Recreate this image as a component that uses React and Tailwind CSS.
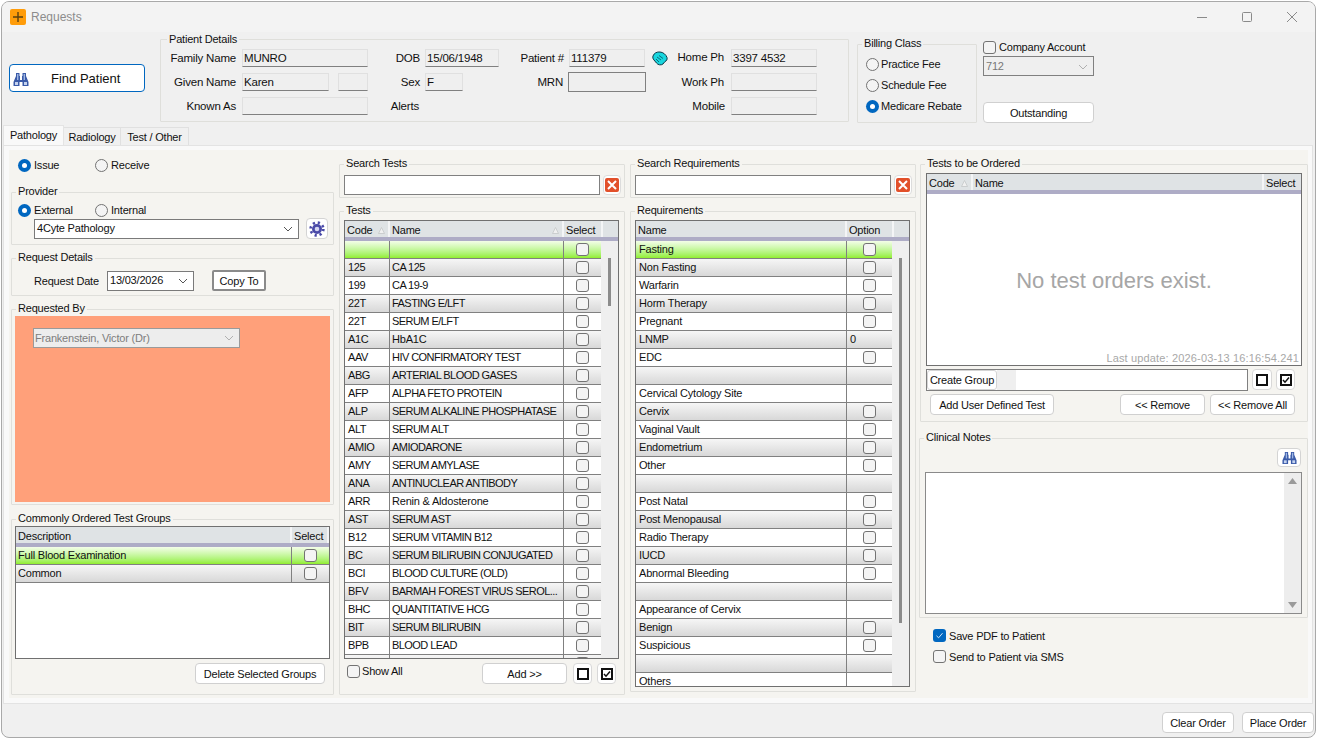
import React from 'react'

const tests = [
  ['', ''],
  ['125', 'CA 125'],
  ['199', 'CA 19-9'],
  ['22T', 'FASTING E/LFT'],
  ['22T', 'SERUM E/LFT'],
  ['A1C', 'HbA1C'],
  ['AAV', 'HIV CONFIRMATORY TEST'],
  ['ABG', 'ARTERIAL BLOOD GASES'],
  ['AFP', 'ALPHA FETO PROTEIN'],
  ['ALP', 'SERUM ALKALINE PHOSPHATASE'],
  ['ALT', 'SERUM ALT'],
  ['AMIO', 'AMIODARONE'],
  ['AMY', 'SERUM AMYLASE'],
  ['ANA', 'ANTINUCLEAR ANTIBODY'],
  ['ARR', 'Renin & Aldosterone'],
  ['AST', 'SERUM AST'],
  ['B12', 'SERUM VITAMIN B12'],
  ['BC', 'SERUM BILIRUBIN CONJUGATED'],
  ['BCI', 'BLOOD CULTURE (OLD)'],
  ['BFV', 'BARMAH FOREST VIRUS SEROL...'],
  ['BHC', 'QUANTITATIVE HCG'],
  ['BIT', 'SERUM BILIRUBIN'],
  ['BPB', 'BLOOD LEAD'],
  ['', ''],
]

// option: true = checkbox, string = text, false = empty cell
const requirements = [
  ['Fasting', true],
  ['Non Fasting', true],
  ['Warfarin', true],
  ['Horm Therapy', true],
  ['Pregnant', true],
  ['LNMP', '0'],
  ['EDC', true],
  ['', false],
  ['Cervical Cytology Site', false],
  ['Cervix', true],
  ['Vaginal Vault', true],
  ['Endometrium', true],
  ['Other', true],
  ['', false],
  ['Post Natal', true],
  ['Post Menopausal', true],
  ['Radio Therapy', true],
  ['IUCD', true],
  ['Abnormal Bleeding', true],
  ['', false],
  ['Appearance of Cervix', false],
  ['Benign', true],
  ['Suspicious', true],
  ['', false],
  ['Others', false],
]

function rowBg(i) {
  if (i === 0) return 'bg-linear-to-b from-[#f4fde8] to-[#92ee2c]'
  return i % 2 === 1 ? 'bg-linear-to-b from-[#f6f6f6] to-[#d8d8d8]' : 'bg-white'
}

function Group({ title, className, legend = 'ml-[4px] leading-[13px]', children }) {
  return (
    <fieldset className={`min-w-0 border border-[#dfdfdb] rounded-[1px] ${className}`}>
      <legend className={`px-[2px] h-[14px] ${legend}`}>{title}</legend>
      {children}
    </fieldset>
  )
}

function Check({ checked }) {
  if (checked) {
    return (
      <span className="w-[13px] h-[13px] rounded-[3px] bg-[#0067c0] flex items-center justify-center shrink-0">
        <svg width="9" height="9" viewBox="0 0 9 9"><path d="M1.5 4.8 L3.6 6.8 L7.5 2.2" fill="none" stroke="#cfe4f7" strokeWidth="1" /></svg>
      </span>
    )
  }
  return <span className="block w-[13px] h-[13px] rounded-[3px] border border-[#737373] bg-[#f4f4f4] shrink-0" />
}

function Radio({ checked }) {
  if (checked) {
    return (
      <span className="w-[13px] h-[13px] rounded-full bg-[#0067c0] flex items-center justify-center shrink-0">
        <span className="block w-[5px] h-[5px] rounded-full bg-white" />
      </span>
    )
  }
  return <span className="block w-[13px] h-[13px] rounded-full border border-[#737373] bg-[#f4f4f4] shrink-0" />
}

function Btn({ className, children }) {
  return (
    <div className={`h-[21px] pt-[1px] flex items-center justify-center whitespace-nowrap bg-white border border-[#d0d0d0] rounded-[4px] ${className}`}>
      {children}
    </div>
  )
}

function Field({ value, className = '' }) {
  return (
    <div className={`h-[18px] leading-[17px] px-[1px] text-[11.5px] bg-[#efefef] border border-[#e0e0e0] border-b-[#808080] ${className}`}>
      {value}
    </div>
  )
}

function Label({ className, children }) {
  return <div className={`h-[18px] leading-[18px] text-right text-[11.5px] ${className}`}>{children}</div>
}

function Chevron({ color = '#555' }) {
  return (
    <svg width="10" height="6" viewBox="0 0 10 6" className="shrink-0">
      <path d="M1 1 L5 5 L9 1" fill="none" stroke={color} strokeWidth="1" />
    </svg>
  )
}

function Dropdown({ value, className }) {
  return (
    <div className={`h-[20px] flex items-center justify-between pl-[2px] pr-[5px] bg-white border border-[#7a7a7a] ${className}`}>
      <span>{value}</span>
      <Chevron />
    </div>
  )
}

function Binoculars({ size = 16 }) {
  return (
    <svg width={size} height={size} viewBox="0 0 16 16">
      <path d="M3 2 H6.5 V5 H7 V9 H9 V5 H9.5 V2 H13 V5 L15.5 11 V15 H9.5 V11 H6.5 V15 H0.5 V11 L3 5 Z" fill="#3a5aa8" />
      <rect x="2" y="11" width="3" height="3" fill="#c4d2ee" />
      <rect x="11" y="11" width="3" height="3" fill="#c4d2ee" />
      <rect x="4" y="3" width="1.4" height="6" fill="#9fb6e2" />
      <rect x="10.6" y="3" width="1.4" height="6" fill="#9fb6e2" />
    </svg>
  )
}

function Phone() {
  return (
    <svg width="16" height="15" viewBox="0 0 16 15">
      <path d="M1 5 C2 2 5 0.7 8 1 C11 1.2 14 3.5 15 6.5 C15.5 8.5 14.5 10 13 10.5 L11 13 C9 14.5 6 14 4.5 12 L2 9 C0.8 7.8 0.6 6.4 1 5 Z" fill="#18d6de" stroke="#0c3a4a" strokeWidth="1" />
      <path d="M5 6 L9 9 M7 4.5 L11 7.5 M4 8 L7 11" stroke="#0c6a7a" strokeWidth="1" />
    </svg>
  )
}

function Gear() {
  return (
    <svg width="16" height="16" viewBox="0 0 16 16">
      <circle cx="8" cy="8" r="6.4" fill="none" stroke="#4a4aa8" strokeWidth="2.6" strokeDasharray="2.2 2.83" />
      <circle cx="8" cy="8" r="5" fill="#4a4aa8" />
      <circle cx="8" cy="8" r="2.3" fill="#d5d6f2" />
    </svg>
  )
}

function ClearBtn() {
  return (
    <div className="w-[18px] h-[20px] bg-white border border-[#dcdcdc] rounded-[4px] flex items-center justify-center">
      <div className="w-[14px] h-[14px] rounded-[2px] bg-[#e2502a] flex items-center justify-center">
        <svg width="10" height="10" viewBox="0 0 10 10"><path d="M1 1 L9 9 M9 1 L1 9" stroke="#fff" strokeWidth="2" /></svg>
      </div>
    </div>
  )
}

function BoxBtn({ ticked, className }) {
  return (
    <div className={`h-[21px] bg-white border border-[#d8d8d8] rounded-[4px] flex items-center justify-center ${className}`}>
      <span className="w-[12px] h-[12px] border-2 border-[#111] flex items-center justify-center">
        {ticked && (
          <svg width="8" height="8" viewBox="0 0 8 8"><path d="M1 4 L3 6.2 L7 1.5" fill="none" stroke="#111" strokeWidth="1.5" /></svg>
        )}
      </span>
    </div>
  )
}

function SortArrow() {
  return (
    <svg width="7" height="7" viewBox="0 0 7 7" className="shrink-0">
      <path d="M3.5 0.5 L6.5 6.5 H0.5 Z" fill="#f0f0f0" stroke="#c4c6c8" strokeWidth="0.8" />
    </svg>
  )
}

function HeadCell({ className, sorted, children }) {
  return (
    <div className={`h-full flex items-center justify-between pt-[3px] pl-[2px] pr-[3px] border-r-2 border-r-[#f4f5f6] ${className}`}>
      <span>{children}</span>
      {sorted && <SortArrow />}
    </div>
  )
}

function Stripe() {
  return <div className="h-[4px] bg-[#aeacc6]" />
}

function Scrollbar({ thumb }) {
  return (
    <div className="w-[17px] bg-[#efefef] flex flex-col items-center">
      <div className={`w-[3px] mt-[17px] bg-[#8b8b8b] ${thumb}`} />
    </div>
  )
}

function SelectCell({ className, children }) {
  return <div className={`h-full flex items-center justify-center ${className}`}>{children}</div>
}

function RadioRow({ className, checked, children }) {
  return (
    <div className={`flex items-center gap-[3px] ${className}`}>
      <Radio checked={checked} />
      <span className="pt-[1px]">{children}</span>
    </div>
  )
}

export default function App() {
  return (
    <div
      className="w-[1317px] h-[739px] p-[1px] bg-white text-[#111] text-[11px] tracking-[-0.2px] overflow-hidden"
      style={{ fontFamily: '"Liberation Sans", Arial, sans-serif' }}
    >
      <div className="h-full flex flex-col border border-[#a9a9a9] rounded-[8px] bg-[#f0f0f0] overflow-hidden">
        {/* Title bar */}
        <div className="h-[30px] shrink-0 bg-[#f3f3f3] flex items-center pl-[8px]">
          <div className="w-[16px] h-[16px] rounded-[2px] bg-[#ff9c0a] flex items-center justify-center">
            <svg width="10" height="10" viewBox="0 0 10 10"><path d="M5 0 V10 M0 5 H10" stroke="#5a4010" strokeWidth="1.4" /></svg>
          </div>
          <span className="ml-[5px] text-[12px] tracking-normal text-[#8c8c8c]">Requests</span>
          <div className="ml-auto flex items-center pr-[18px] gap-[35px]">
            <svg width="10" height="10" viewBox="0 0 10 10"><path d="M0 5.5 H10" stroke="#8a8a8a" /></svg>
            <svg width="10" height="10" viewBox="0 0 10 10"><rect x="0.5" y="0.5" width="9" height="9" rx="1" fill="none" stroke="#8a8a8a" /></svg>
            <svg width="10" height="10" viewBox="0 0 10 10"><path d="M0 0 L10 10 M10 0 L0 10" stroke="#8a8a8a" /></svg>
          </div>
        </div>

        {/* Patient header */}
        <div className="h-[93px] shrink-0 flex items-start">
          <div className="ml-[7px] mt-[32px] w-[136px] h-[28px] pt-[1px] flex items-center bg-white border border-[#0067c0] rounded-[4px] pl-[3px]">
            <Binoculars />
            <span className="ml-[22px] text-[13px] tracking-normal">Find Patient</span>
          </div>

          <Group title="Patient Details" legend="ml-[6px] leading-[15px]" className="ml-[15px] w-[689px] h-[90px]">
            <div className="pt-[3px] grid grid-cols-[81px_126px_57px_74px_70px_76px_86px_86px] gap-y-[6px]">
              <Label className="pr-[6px]">Family Name</Label>
              <Field value="MUNRO" />
              <Label className="pr-[5px]">DOB</Label>
              <Field value="15/06/1948" />
              <Label className="pr-[5px]">Patient #</Label>
              <Field value="111379" />
              <div className="h-[18px] flex items-center justify-between pl-[7px] pr-[7px] text-[11.5px]">
                <Phone />
                <span>Home Ph</span>
              </div>
              <Field value="3397 4532" />

              <Label className="pr-[6px]">Given Name</Label>
              <div className="flex justify-between">
                <Field value="Karen" className="w-[87px]" />
                <Field value="" className="w-[30px]" />
              </div>
              <Label className="pr-[5px]">Sex</Label>
              <Field value="F" className="w-[38px]" />
              <Label className="pr-[6px]">MRN</Label>
              <div className="h-[20px] -mt-[1px] -mb-[1px] -ml-[1px] w-[78px] bg-[#efefef] border border-[#808080]" />
              <Label className="pr-[7px]">Work Ph</Label>
              <Field value="" />

              <Label className="pr-[6px]">Known As</Label>
              <Field value="" />
              <Label className="pr-[6px]">Alerts</Label>
              <div />
              <div />
              <div />
              <Label className="pr-[6px]">Mobile</Label>
              <Field value="" />
            </div>
          </Group>

          <Group title="Billing Class" className="ml-[8px] mt-[5px] w-[120px] h-[86px]">
            <div className="pt-[3px] pl-[8px]">
              <div className="h-[21px] flex items-center gap-[2px]"><Radio /><span>Practice Fee</span></div>
              <div className="h-[21px] flex items-center gap-[2px]"><Radio /><span>Schedule Fee</span></div>
              <div className="h-[21px] flex items-center gap-[2px]"><Radio checked /><span>Medicare Rebate</span></div>
            </div>
          </Group>

          <div className="ml-[6px] w-[111px]">
            <div className="mt-[8px] h-[14px] flex items-center gap-[3px]"><Check /><span className="pt-[1px]">Company Account</span></div>
            <div className="mt-[2px] h-[20px] pt-[1px] flex items-center justify-between pl-[2px] pr-[5px] bg-[#efefef] border border-[#808080] text-[#777]">
              <span>712</span>
              <Chevron color="#b0b0b0" />
            </div>
            <Btn className="mt-[26px]">Outstanding</Btn>
          </div>
        </div>

        {/* Tabs */}
        <div className="h-[20px] shrink-0 flex items-end pl-[1px]">
          <div className="w-[61px] h-[20px] leading-[18px] text-center bg-[#f9f9f9] border border-b-0 border-[#e4e4e4]">Pathology</div>
          <div className="w-[57px] h-[18px] leading-[18px] text-center border border-b-0 border-l-0 border-[#e0e0e0]">Radiology</div>
          <div className="w-[68px] h-[18px] leading-[18px] text-center border border-b-0 border-l-0 border-[#e0e0e0]">Test / Other</div>
        </div>

        {/* Tab page */}
        <div className="h-[559px] shrink-0 ml-[1px] mr-[2px] bg-[#f9f9f9] border border-[#e3e3e3] pl-[5px] pt-[4px] pr-[4px] pb-[5px]">
          <div className="w-[1299px] h-[548px] bg-[#f5f4f0] flex items-start">
            {/* Left column */}
            <div className="ml-[2px] w-[323px]">
              <div className="mt-[8px] pl-[7px] h-[14px] flex items-center">
                <RadioRow checked className="w-[77px]">Issue</RadioRow>
                <RadioRow>Receive</RadioRow>
              </div>

              <Group title="Provider" className="mt-[13px] h-[60px]">
                <div className="pt-[4px] pl-[6px] h-[18px] flex items-center">
                  <RadioRow checked className="w-[77px]">External</RadioRow>
                  <RadioRow>Internal</RadioRow>
                </div>
                <div className="mt-[1px] pl-[22px] flex items-center">
                  <Dropdown value="4Cyte Pathology" className="w-[265px]" />
                  <div className="ml-[7px] w-[22px] h-[21px] bg-white border border-[#d4d4d4] rounded-[4px] flex items-center justify-center">
                    <Gear />
                  </div>
                </div>
              </Group>

              <Group title="Request Details" className="mt-[6px] h-[45px]">
                <div className="pt-[5px] pl-[22px] flex items-center">
                  <span className="w-[73px] pt-[1px]">Request Date</span>
                  <Dropdown value="13/03/2026" className="w-[87px]" />
                  <div className="ml-[18px] w-[54px] h-[21px] pt-[1px] flex items-center justify-center bg-white border-2 border-[#8a8a8a] rounded-[2px]">Copy To</div>
                </div>
              </Group>

              <Group title="Requested By" className="mt-[6px] h-[203px]">
                <div className="mx-[3px] h-[186px] bg-[#ffa07a] pt-[12px] pl-[18px]">
                  <div className="w-[207px] h-[20px] flex items-center justify-between pl-[1px] pr-[5px] bg-[#ededed] border border-[#9a9a9a] text-[#7d7d7d]">
                    <span className="pt-[1px]">Frankenstein, Victor (Dr)</span>
                    <Chevron color="#b0b0b0" />
                  </div>
                </div>
              </Group>

              <Group title="Commonly Ordered Test Groups" className="mt-[7px] h-[183px]">
                <div className="ml-[3px] w-[315px] h-[133px] bg-white border border-[#707070] overflow-hidden">
                  <div className="h-[16px] bg-[#dfe3e5] flex">
                    <HeadCell className="w-[276px]">Description</HeadCell>
                    <HeadCell className="w-[37px]">Select</HeadCell>
                  </div>
                  <Stripe />
                  {['Full Blood Examination', 'Common'].map((name, i) => (
                    <div key={name} className={`h-[18px] flex border-b border-[#808080] ${rowBg(i)}`}>
                      <div className="w-[276px] pl-[2px] leading-[17px] border-r border-[#808080]">{name}</div>
                      <SelectCell className="flex-1"><Check /></SelectCell>
                    </div>
                  ))}
                </div>
                <div className="mt-[4px] flex justify-end pr-[8px]">
                  <Btn className="w-[130px]">Delete Selected Groups</Btn>
                </div>
              </Group>
            </div>

            {/* Tests column */}
            <div className="ml-[5px] w-[286px]">
              <Group title="Search Tests" className="mt-[7px] h-[41px]">
                <div className="pt-[4px] pl-[4px] flex">
                  <div className="w-[256px] h-[20px] bg-white border border-[#808080]" />
                  <div className="ml-[3px]"><ClearBtn /></div>
                </div>
              </Group>
              <Group title="Tests" className="mt-[6px] h-[491px]">
                <div className="pt-[2px] pl-[4px]">
                  <div className="w-[275px] h-[439px] border border-[#707070] overflow-hidden bg-white">
                    <div className="h-[16px] bg-[#dfe3e5] flex">
                      <HeadCell className="w-[45px]" sorted>Code</HeadCell>
                      <HeadCell className="w-[174px]" sorted>Name</HeadCell>
                      <HeadCell className="w-[39px]">Select</HeadCell>
                    </div>
                    <Stripe />
                    <div className="flex h-[417px]">
                      <div className="w-[256px]">
                        {tests.map(([code, name], i) => (
                          <div key={i} className={`h-[18px] flex border-b border-[#808080] ${rowBg(i)}`}>
                            <div className="w-[45px] pl-[3px] leading-[17px] tracking-[-0.4px] border-r border-[#808080]">{code}</div>
                            <div className={`w-[174px] pl-[2px] leading-[17px] border-r border-[#808080] whitespace-nowrap ${name === name.toUpperCase() ? 'tracking-[-0.55px]' : ''}`}>{name}</div>
                            <SelectCell className="flex-1"><Check /></SelectCell>
                          </div>
                        ))}
                      </div>
                      <Scrollbar thumb="h-[48px]" />
                    </div>
                  </div>
                  <div className="mt-[4px] h-[21px] flex items-start">
                    <div className="ml-[3px] w-[135px] flex items-center gap-[2px]"><Check /><span>Show All</span></div>
                    <Btn className="w-[85px]">{'Add >>'}</Btn>
                    <BoxBtn className="ml-[6px] w-[19px]" />
                    <BoxBtn ticked className="ml-[5px] w-[19px]" />
                  </div>
                </div>
              </Group>
            </div>

            {/* Requirements column */}
            <div className="ml-[5px] w-[286px]">
              <Group title="Search Requirements" className="mt-[7px] h-[41px]">
                <div className="pt-[4px] pl-[4px] flex">
                  <div className="w-[256px] h-[20px] bg-white border border-[#808080]" />
                  <div className="ml-[3px]"><ClearBtn /></div>
                </div>
              </Group>
              <Group title="Requirements" className="mt-[6px] h-[488px]">
                <div className="pt-[2px] pl-[4px]">
                  <div className="w-[275px] h-[467px] border border-[#707070] overflow-hidden bg-white">
                    <div className="h-[16px] bg-[#dfe3e5] flex">
                      <HeadCell className="w-[211px]">Name</HeadCell>
                      <HeadCell className="w-[47px]">Option</HeadCell>
                    </div>
                    <Stripe />
                    <div className="flex h-[445px]">
                      <div className="w-[256px]">
                        {requirements.map(([name, option], i) => (
                          <div key={i} className={`h-[18px] flex border-b border-[#808080] ${rowBg(i)}`}>
                            <div className="w-[211px] pl-[3px] leading-[17px] border-r border-[#808080]">{name}</div>
                            <SelectCell className="flex-1">
                              {option === true && <Check />}
                              {typeof option === 'string' && <span className="w-full pl-[3px]">{option}</span>}
                            </SelectCell>
                          </div>
                        ))}
                      </div>
                      <Scrollbar thumb="h-[365px]" />
                    </div>
                  </div>
                </div>
              </Group>
            </div>

            {/* Orders column */}
            <div className="ml-[3px] w-[389px]">
              <Group title="Tests to be Ordered" className="ml-[1px] mt-[7px] h-[265px]">
                <div className="pt-[2px] pl-[5px]">
                  <div className="w-[376px] h-[193px] border border-[#707070] bg-white flex flex-col overflow-hidden">
                    <div className="h-[16px] shrink-0 bg-[#dfe3e5] flex">
                      <HeadCell className="w-[46px]" sorted>Code</HeadCell>
                      <HeadCell className="w-[291px]">Name</HeadCell>
                      <div className="flex-1 pl-[2px] pt-[1px] leading-[16px]">Select</div>
                    </div>
                    <Stripe />
                    <div className="flex-1 flex flex-col">
                      <div className="flex-1 pt-[16px] flex items-center justify-center text-[22px] tracking-normal text-[#a6a6a6]">No test orders exist.</div>
                      <div className="h-[15px] pr-[2px] text-right text-[11px] tracking-[0.15px] text-[#a8a8a8]">Last update: 2026-03-13 16:16:54.241</div>
                    </div>
                  </div>
                  <div className="mt-[3px] flex items-start">
                    <div className="w-[322px] h-[22px] border border-[#808080] bg-white flex">
                      <div className="w-[70px] h-[20px] flex items-center justify-center whitespace-nowrap bg-white border border-[#d4d4d4] rounded-[3px]">Create Group</div>
                      <div className="w-[19px] h-[20px] bg-[#efefef]" />
                    </div>
                    <BoxBtn className="ml-[4px] w-[20px]" />
                    <BoxBtn ticked className="ml-[4px] w-[19px]" />
                  </div>
                  <div className="mt-[3px] pl-[4px] flex">
                    <Btn className="w-[124px]">Add User Defined Test</Btn>
                    <Btn className="ml-[66px] w-[85px]">{'<< Remove'}</Btn>
                    <Btn className="ml-[5px] w-[85px]">{'<< Remove All'}</Btn>
                  </div>
                </div>
              </Group>

              <Group title="Clinical Notes" className="mt-[9px] h-[187px]">
                <div className="pt-[3px] pr-[6px] flex justify-end">
                  <div className="w-[24px] h-[19px] bg-white border border-[#d4d4d4] rounded-[4px] flex items-center justify-center">
                    <Binoculars size={15} />
                  </div>
                </div>
                <div className="mt-[5px] ml-[5px] w-[377px] h-[142px] bg-white border border-[#8a8a8a] flex justify-end">
                  <div className="w-[17px] bg-[#ededed] flex flex-col items-center justify-between py-[5px]">
                    <svg width="9" height="6" viewBox="0 0 9 6"><path d="M4.5 0 L9 6 H0 Z" fill="#9a9a9a" /></svg>
                    <svg width="9" height="6" viewBox="0 0 9 6"><path d="M0 0 H9 L4.5 6 Z" fill="#9a9a9a" /></svg>
                  </div>
                </div>
              </Group>

              <div className="mt-[11px] h-[13px] pl-[14px] flex items-center gap-[3px]"><Check checked /><span className="pt-[1px]">Save PDF to Patient</span></div>
              <div className="mt-[8px] h-[13px] pl-[14px] flex items-center gap-[3px]"><Check /><span className="pt-[1px]">Send to Patient via SMS</span></div>
            </div>
          </div>
        </div>

        {/* Footer */}
        <div className="flex-1 flex items-start justify-end pt-[8px] pr-[1px] gap-[8px]">
          <Btn className="w-[72px]">Clear Order</Btn>
          <Btn className="w-[72px]">Place Order</Btn>
        </div>
      </div>
    </div>
  )
}
